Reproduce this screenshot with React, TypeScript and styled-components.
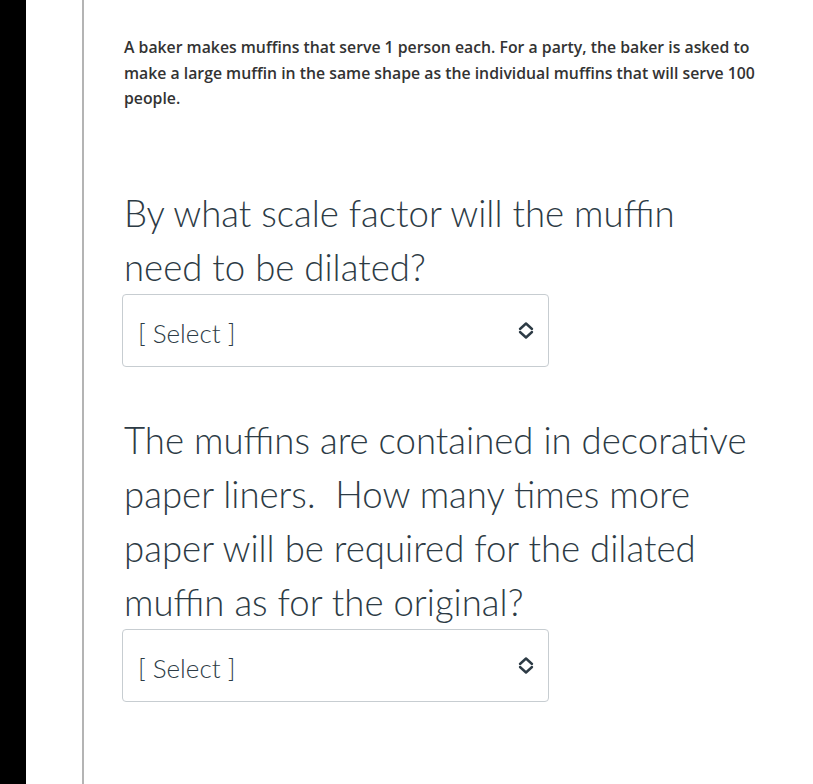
import styled, { createGlobalStyle } from 'styled-components';

const GlobalStyle = createGlobalStyle`
  html, body {
    margin: 0;
    padding: 0;
    background: #fff;
  }
  body {
    font-family: 'Lato', 'Noto Sans', sans-serif;
    color: #2d3b45;
  }
`;

const Page = styled.div`
  display: flex;
  min-height: 784px;
  overflow: hidden;
`;

const BlackStrip = styled.div`
  width: 26px;
  flex-shrink: 0;
  background: #000;
`;

const Gutter = styled.div`
  width: 56px;
  flex-shrink: 0;
`;

const Panel = styled.div`
  width: 718px;
  flex-shrink: 0;
  border-left: 2px solid #b4b4b4;
  border-right: 2px solid #b4b4b4;
  padding: 35px 0 0 40px;
  box-sizing: content-box;
`;

const Intro = styled.p`
  margin: 0 0 74.5px;
  width: 640px;
  font-family: 'Open Sans', 'Noto Sans', sans-serif;
  font-size: 15.8px;
  font-weight: 600;
  line-height: 25.5px;
  color: #333;
`;

const Question = styled.p`
  margin: 0;
  width: 660px;
  font-family: 'Lato', sans-serif;
  font-weight: 300;
  font-size: 36.6px;
  line-height: 54px;
  color: #2d3b45;
`;

const Block = styled.div<{ $top: number }>`
  margin-top: ${({ $top }) => $top}px;
`;

const SelectBox = styled.div`
  width: 427px;
  height: 73px;
  box-sizing: border-box;
  border: 1px solid #c7cdd1;
  border-radius: 4px;
  display: flex;
  align-items: center;
  justify-content: space-between;
  padding: 0 13px 0 15px;
  margin-left: -2px;
`;

const SelectText = styled.span`
  font-family: 'Lato', sans-serif;
  font-weight: 300;
  font-size: 26px;
  color: #2d3b45;
  padding-top: 4px;
`;

function Chevrons() {
  return (
    <svg width="18" height="19" viewBox="0 0 18 19" fill="none">
      <polyline
        points="3,8 9,2.5 15,8"
        stroke="#2d3b45"
        strokeWidth="2.4"
        strokeLinecap="round"
        strokeLinejoin="round"
      />
      <polyline
        points="3,11 9,16.5 15,11"
        stroke="#2d3b45"
        strokeWidth="2.4"
        strokeLinecap="round"
        strokeLinejoin="round"
      />
    </svg>
  );
}

function Dropdown() {
  return (
    <SelectBox>
      <SelectText>[ Select ]</SelectText>
      <Chevrons />
    </SelectBox>
  );
}

export default function App() {
  return (
    <>
      <GlobalStyle />
      <Page>
        <BlackStrip />
        <Gutter />
        <Panel>
          <Intro>
            A baker makes muffins that serve 1 person each. For a party, the baker is asked to
            make a large muffin in the same shape as the individual muffins that will serve 100
            people.
          </Intro>
          <Question>
            By what scale factor will the muffin
            <br />
            need to be dilated?
          </Question>
          <Dropdown />
          <Block $top={46}>
            <Question>
              The muffins are contained in decorative
              <br />
              paper liners.&nbsp; How many times more
              <br />
              paper will be required for the dilated
              <br />
              muffin as for the original?
            </Question>
            <Dropdown />
          </Block>
        </Panel>
      </Page>
    </>
  );
}
